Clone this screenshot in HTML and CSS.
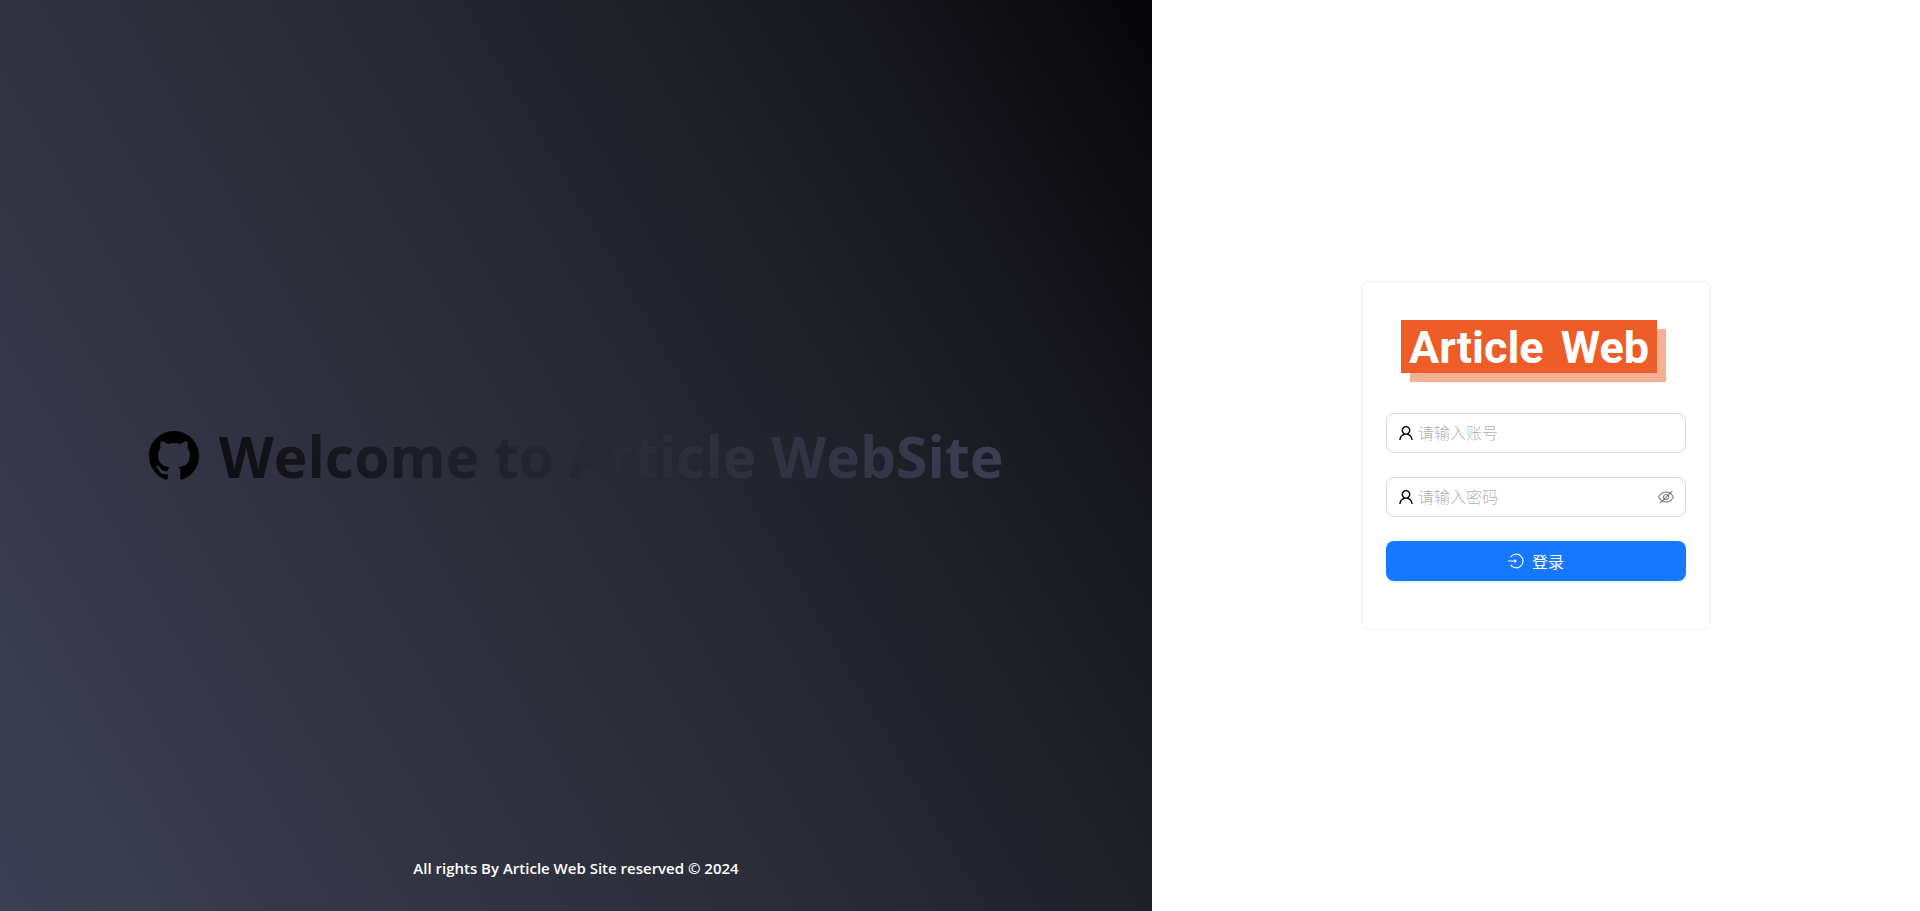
FILE: index.html
```html
<!DOCTYPE html>
<html lang="zh-CN">
<head>
    <meta charset="UTF-8">
    <meta name="viewport" content="width=device-width, initial-scale=1.0">
    <title>Article Web</title>
    <link rel="stylesheet" href="styles.css">
</head>
<body>
    <div class="login-page">
        <section class="welcome">
            <div class="welcome-main">
                <svg class="github-icon" viewBox="0 0 16 16" aria-hidden="true">
                    <path d="M8 0C3.58 0 0 3.58 0 8c0 3.54 2.29 6.53 5.47 7.59.4.07.55-.17.55-.38 0-.19-.01-.82-.01-1.49-2.01.37-2.53-.49-2.69-.94-.09-.23-.48-.94-.82-1.13-.28-.15-.68-.52-.01-.53.63-.01 1.08.58 1.23.82.72 1.21 1.87.87 2.33.66.07-.52.28-.87.51-1.07-1.78-.2-3.64-.89-3.64-3.95 0-.87.31-1.59.82-2.15-.08-.2-.36-1.02.08-2.12 0 0 .67-.21 2.2.82.64-.18 1.32-.27 2-.27s1.36.09 2 .27c1.53-1.04 2.2-.82 2.2-.82.44 1.1.16 1.92.08 2.12.51.56.82 1.27.82 2.15 0 3.07-1.87 3.75-3.65 3.95.29.25.54.73.54 1.48 0 1.07-.01 1.93-.01 2.2 0 .21.15.46.55.38A8.01 8.01 0 0 0 16 8c0-4.42-3.58-8-8-8z"/>
                </svg>
                <h1>Welcome to Article WebSite</h1>
            </div>
            <footer>All rights By Article Web Site reserved © 2024</footer>
        </section>
        <main class="login">
            <form class="login-card">
                <div class="logo"><span>Article</span> <span>Web</span></div>
                <div class="field">
                    <label for="account" aria-label="请输入账号">
                        <svg class="icon" viewBox="64 64 896 896"><path d="M858.5 763.6a374 374 0 0 0-80.6-119.5 375.63 375.63 0 0 0-119.5-80.6c-.4-.2-.8-.3-1.2-.5C719.5 518 760 444.7 760 362c0-137-111-248-248-248S264 225 264 362c0 82.7 40.5 156 102.8 201.1-.4.2-.8.3-1.2.5-44.8 18.9-85 46-119.5 80.6a375.63 375.63 0 0 0-80.6 119.5A371.7 371.7 0 0 0 136 901.8a8 8 0 0 0 8 8.2h60c4.4 0 7.9-3.5 8-7.8 2-77.2 33-149.5 87.8-204.3 56.7-56.7 132-87.9 212.2-87.9s155.5 31.2 212.2 87.9C779 752.7 810 825 812 902.2c.1 4.4 3.6 7.8 8 7.8h60a8 8 0 0 0 8-8.2c-1-47.8-10.9-94.3-29.5-138.2zM512 534c-45.9 0-89.1-17.9-121.6-50.4S340 407.9 340 362c0-45.9 17.9-89.1 50.4-121.6S466.1 190 512 190s89.1 17.9 121.6 50.4S684 316.1 684 362c0 45.9-17.9 89.1-50.4 121.6S557.9 534 512 534z"/></svg>
                    </label>
                    <input type="text" id="account" placeholder="请输入账号">
                </div>
                <div class="field">
                    <label for="password" aria-label="请输入密码">
                        <svg class="icon" viewBox="64 64 896 896"><path d="M858.5 763.6a374 374 0 0 0-80.6-119.5 375.63 375.63 0 0 0-119.5-80.6c-.4-.2-.8-.3-1.2-.5C719.5 518 760 444.7 760 362c0-137-111-248-248-248S264 225 264 362c0 82.7 40.5 156 102.8 201.1-.4.2-.8.3-1.2.5-44.8 18.9-85 46-119.5 80.6a375.63 375.63 0 0 0-80.6 119.5A371.7 371.7 0 0 0 136 901.8a8 8 0 0 0 8 8.2h60c4.4 0 7.9-3.5 8-7.8 2-77.2 33-149.5 87.8-204.3 56.7-56.7 132-87.9 212.2-87.9s155.5 31.2 212.2 87.9C779 752.7 810 825 812 902.2c.1 4.4 3.6 7.8 8 7.8h60a8 8 0 0 0 8-8.2c-1-47.8-10.9-94.3-29.5-138.2zM512 534c-45.9 0-89.1-17.9-121.6-50.4S340 407.9 340 362c0-45.9 17.9-89.1 50.4-121.6S466.1 190 512 190s89.1 17.9 121.6 50.4S684 316.1 684 362c0 45.9-17.9 89.1-50.4 121.6S557.9 534 512 534z"/></svg>
                    </label>
                    <input type="password" id="password" placeholder="请输入密码">
                    <button type="button" class="toggle" aria-label="显示密码">
                        <svg class="icon" viewBox="64 64 896 896" fill="none" stroke="currentColor" stroke-width="64">
                            <path d="M100 512C185 335 325 236 512 236s327 99 412 276c-85 177-225 276-412 276S185 689 100 512z"/>
                            <circle cx="512" cy="512" r="142"/>
                            <path d="M165 872L872 165"/>
                        </svg>
                    </button>
                </div>
                <button type="submit" class="submit">
                    <svg class="icon" viewBox="0 0 14 14" fill="none" stroke="currentColor">
                        <path d="M2.2 3.6A6 6 0 1 1 2.2 10.4M0 7h6"/>
                        <path d="M5.5 5.3L8 7L5.5 8.7z" fill="currentColor" stroke="none"/>
                    </svg>
                    <span>登录</span>
                </button>
            </form>
        </main>
    </div>
</body>
</html>
```

FILE: styles.css
```css
* {
    box-sizing: border-box;
}
body {
    margin: 0;
    font-family: "Open Sans", "Noto Sans CJK SC", sans-serif;
    font-size: 16px;
    color: rgba(0, 0, 0, 0.88);
    background: #fff;
}
.login-page {
    display: flex;
    min-height: 100vh;
}
.welcome {
    flex: 3;
    display: flex;
    flex-direction: column;
    background: linear-gradient(240deg, #060609 0%, #17171e 18%, #292b35 50%, #36384a 84%, #3d4054 100%);
}
.welcome-main {
    flex: 1;
    display: flex;
    align-items: center;
    justify-content: center;
    gap: 20px;
    padding-top: 56px;
}
.github-icon {
    width: 50px;
    height: 50px;
    fill: #000;
}
h1 {
    margin: 0;
    font-size: 57px;
    line-height: 80px;
    font-weight: 700;
    color: transparent;
    background: linear-gradient(60deg, #0e0e11 0%, #17171e 18%, #292b35 50%, #36384a 84%, #3d4054 100%);
    -webkit-background-clip: text;
    background-clip: text;
}
footer {
    padding: 0 20px 31px;
    font-size: 15px;
    line-height: 24px;
    font-weight: 600;
    color: #fff;
    text-align: center;
}
.login {
    flex: 2;
    display: flex;
    align-items: center;
    justify-content: center;
}
.login-card {
    width: 350px;
    padding: 38px 24px 48px;
    border: 1px solid #f0f0f0;
    border-radius: 8px;
}
.logo {
    display: flex;
    justify-content: space-between;
    width: 256px;
    margin: 0 0 40px 15px;
    padding: 3px 8px 0;
    background: #ee5d27;
    box-shadow: 9px 9px 0 #f6ae95;
    color: #fff;
    font-family: Roboto, sans-serif;
    font-size: 45px;
    line-height: 50px;
    font-weight: 700;
}
.field {
    display: flex;
    align-items: center;
    height: 40px;
    margin-bottom: 24px;
    padding: 0 11px;
    border: 1px solid #d9d9d9;
    border-radius: 8px;
}
.icon {
    display: block;
    width: 16px;
    height: 16px;
}
.field input {
    flex: 1;
    min-width: 0;
    padding: 0 4px;
    border: none;
    outline: none;
    font: inherit;
    font-weight: 300;
    background: none;
}
.field input::placeholder {
    color: rgba(0, 0, 0, 0.35);
}
.field:focus-within {
    border-color: #1677ff;
}
.toggle {
    padding: 0;
    border: none;
    background: none;
    color: rgba(0, 0, 0, 0.45);
    cursor: pointer;
}
.submit {
    display: flex;
    align-items: center;
    justify-content: center;
    gap: 8px;
    width: 100%;
    height: 40px;
    border: none;
    border-radius: 8px;
    background: #1677ff;
    box-shadow: 0 2px 0 rgba(5, 145, 255, 0.1);
    color: #fff;
    font: inherit;
    cursor: pointer;
}
.submit:hover {
    background: #4096ff;
}
```
